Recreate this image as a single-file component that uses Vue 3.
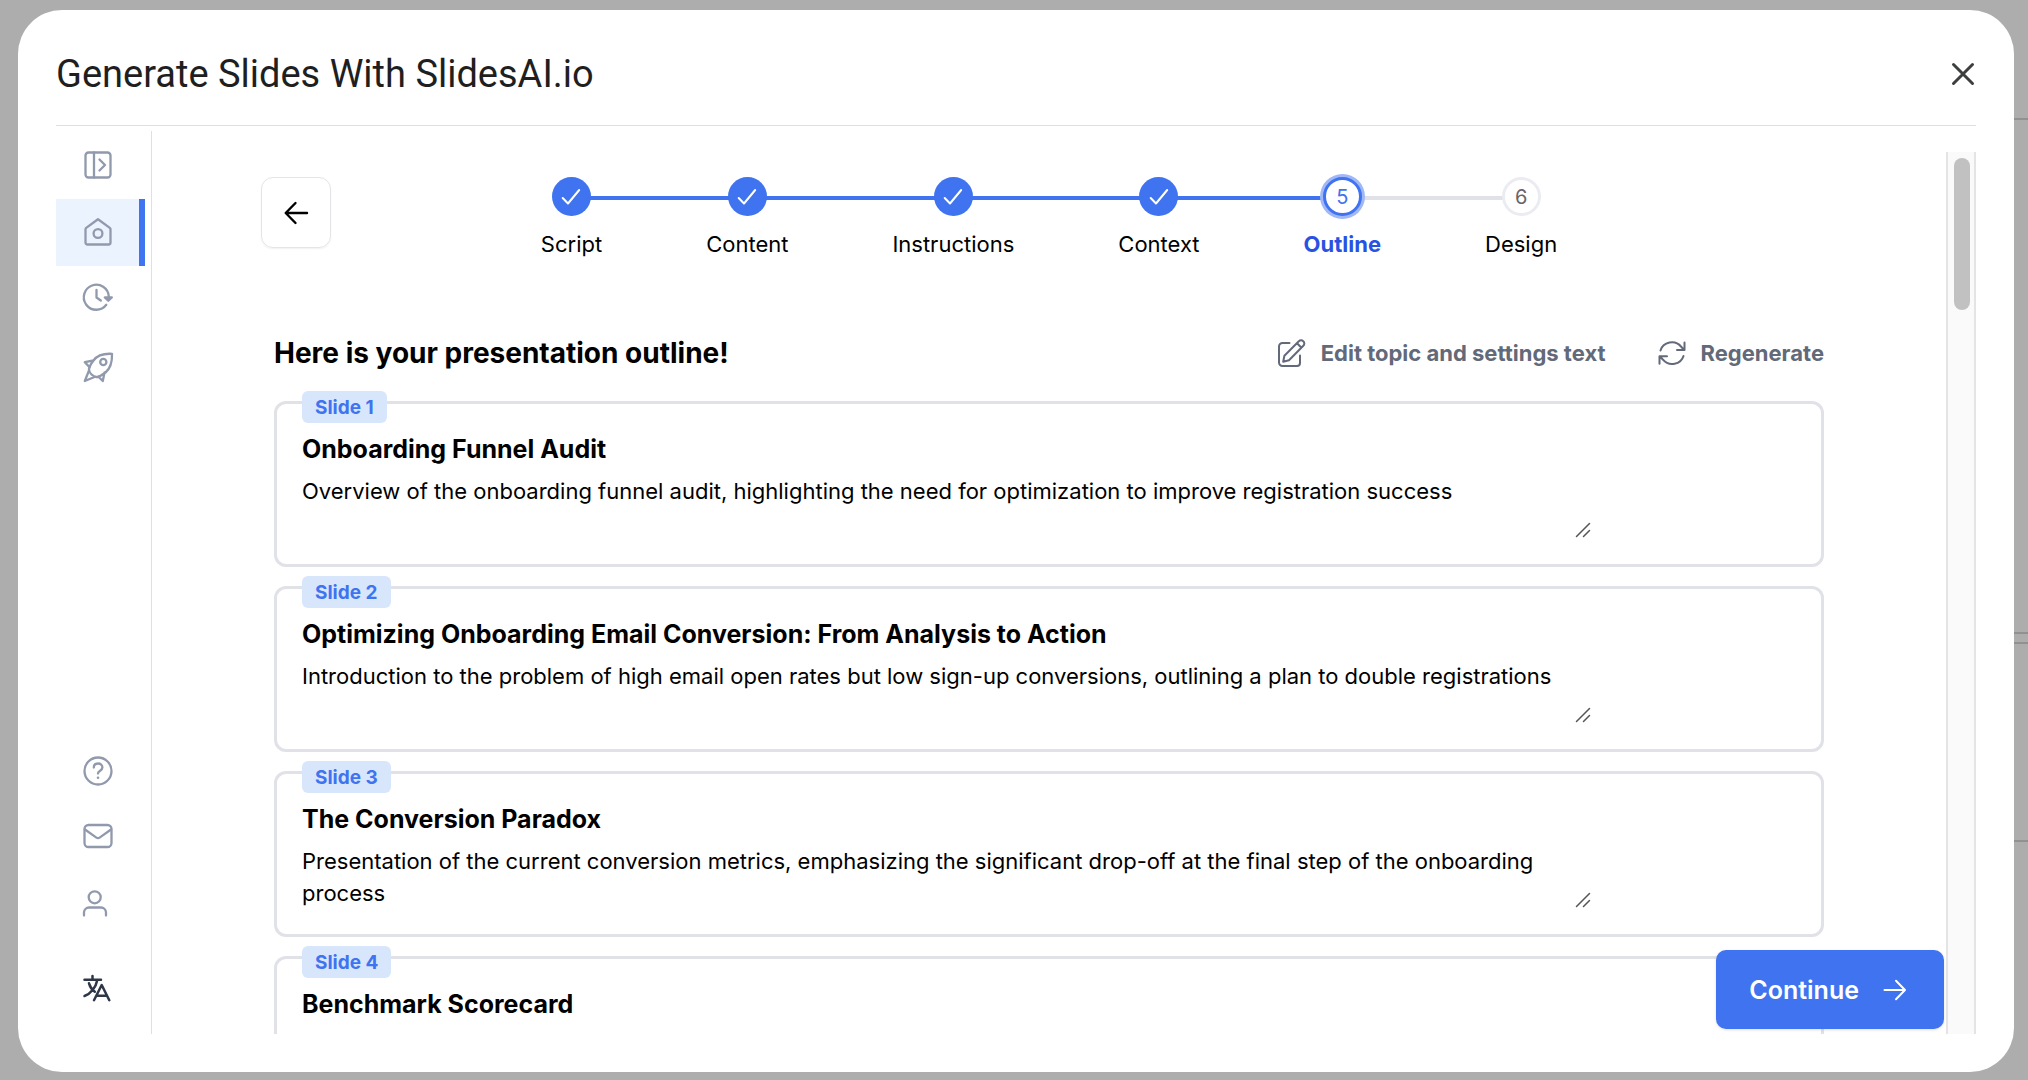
<script setup>
import { ref } from 'vue'

const steps = [
  { label: 'Script', state: 'done' },
  { label: 'Content', state: 'done' },
  { label: 'Instructions', state: 'done' },
  { label: 'Context', state: 'done' },
  { label: 'Outline', state: 'current' },
  { label: 'Design', state: 'todo' },
]

const slides = ref([
  {
    title: 'Onboarding Funnel Audit',
    text: 'Overview of the onboarding funnel audit, highlighting the need for optimization to improve registration success',
  },
  {
    title: 'Optimizing Onboarding Email Conversion: From Analysis to Action',
    text: 'Introduction to the problem of high email open rates but low sign-up conversions, outlining a plan to double registrations',
  },
  {
    title: 'The Conversion Paradox',
    text: 'Presentation of the current conversion metrics, emphasizing the significant drop-off at the final step of the onboarding process',
  },
  { title: 'Benchmark Scorecard', text: '' },
])
</script>

<template>
  <div class="backdrop">
    <div class="behind" aria-hidden="true"><i></i><i></i><i></i><i></i></div>

    <section class="modal" role="dialog" aria-labelledby="dialog-title">
      <header class="modal-head">
        <h1 id="dialog-title">Generate Slides With SlidesAI.io</h1>
        <button class="close" type="button" aria-label="Close">
          <svg width="22" height="22" viewBox="0 0 22 22"><path d="M1.5 1.5l19 19M20.500 1.500l-19 19" /></svg>
        </button>
      </header>

      <div class="body">
        <nav class="side" aria-label="Main">
          <button type="button" aria-label="Expand menu">
            <svg viewBox="0 0 28 28"><rect x="1.500" y=".5" width="25" height="25" rx="3" /><path d="M10 .5v25M15.500 7.500l5.500 5.500-5.500 5.500" /></svg>
          </button>
          <button type="button" class="active" aria-label="Home">
            <svg viewBox="0 1 28 28"><path d="M1.500 11.200c0-.6.300-1 .7-1.300L14 1.300l11.800 8.600c.4.3.7.7.7 1.300v13.300a2 2 0 0 1-2 2h-21a2 2 0 0 1-2-2z" /><circle cx="14" cy="15.500" r="4.400" /></svg>
          </button>
          <button type="button" aria-label="History">
            <svg viewBox="0 0 28 28"><path d="M22.300 18.800a12.500 12.500 0 1 1 2.500-8.300M12.500 4v7.500l4.300 3" /><path class="solid" d="M20.800 11.500h7l-3.500 3.200z" /></svg>
          </button>
          <button type="button" aria-label="Upgrade">
            <svg viewBox="0 0 28 28"><path d="M28 .8C19 .3 13 2.500 9.500 7.500c-3 4-4.500 6.500-4.500 9 0 2 1 3.500 2.500 5s3 2.500 5 2.500c2.500 0 5-1.500 9-4.500 5-4 6.800-9.500 6.500-18.700zM9.500 7.500L.8 9.200l5 5.200M20.500 19.500l-1.700 8.500-4.600-4.500M5 17.500L.8 28l9.700-4" /><circle cx="19.300" cy="9" r="3.100" /></svg>
          </button>
          <button type="button" class="push" aria-label="Help">
            <svg viewBox="0 0 28 28"><circle cx="14" cy="14" r="13.500" /><path d="M9.800 10.500c0-2.500 1.900-4 4.300-4s4.300 1.600 4.300 4c0 3.300-4.400 3-4.400 6" /><circle class="solid dot" cx="14" cy="20.700" r="1.300" /></svg>
          </button>
          <button type="button" class="low" aria-label="Contact">
            <svg viewBox="0 0 28 28"><rect x=".5" y="2" width="27" height="22" rx="4" /><path d="M1 6.500l11.400 8.100a2.800 2.800 0 0 0 3.200 0L27 6.500" /></svg>
          </button>
          <button type="button" class="low" aria-label="Account">
            <svg viewBox="0 0 28 28"><circle cx="10.700" cy="8.300" r="6" /><path d="M0 26.500V23.500a5 5 0 0 1 5-5h12a5 5 0 0 1 5 5v3" /></svg>
          </button>
          <button type="button" class="language" aria-label="Language">
            <svg viewBox="0 0 28 28"><path d="M.5 5.700h16.500M8.500 2v3.700M13.300 6C12 13 7 19.500.5 22M5 9.300c1 3.500 3 6.500 5.800 8.500M10 26.200L17.700 11l7.600 15.200M12.300 21.700h10.800" /></svg>
          </button>
        </nav>

        <main class="content">
          <div class="scroll">
            <div class="top">
              <button class="back" type="button" aria-label="Back">
                <svg width="24" height="24" viewBox="0 0 24 24"><path d="M23 12H2M11.500 2L1.700 12l9.800 10" /></svg>
              </button>
              <ol class="steps">
                <li v-for="(step, i) in steps" :key="step.label" :class="step.state">
                  <span class="bubble">
                    <svg v-if="step.state === 'done'" width="20" height="20" viewBox="0 0 20 20"><path d="M1.700 11l5.300 5.500L18.200 3" /></svg>
                    <template v-else>{{ i + 1 }}</template>
                  </span>
                  <span class="label">{{ step.label }}</span>
                </li>
              </ol>
            </div>

            <div class="outline">
              <div class="outline-head">
                <h2>Here is your presentation outline!</h2>
                <div class="actions">
                  <button type="button">
                    <svg width="28" height="28" viewBox="0 0 28 28"><path d="M11.500 4H4.500A3.500 3.500 0 0 0 1 7.500v16A3.500 3.500 0 0 0 4.500 27h14.500a3 3 0 0 0 3-3v-7.500" /><path d="M5.200 22.800l1.200-6L20.800 2.300a3 3 0 0 1 4.500 0 3 3 0 0 1 0 4.500L11 21.300zM19 4.300l4.500 4.500" /></svg>
                    Edit topic and settings text
                  </button>
                  <button type="button">
                    <svg width="28" height="28" viewBox="0 0 28 28"><path d="M2.500 11.500C5 3 17 .2 23 7.500l3 3.300M26.500 3.500v7.500h-7.500M25.500 17C23 25.500 11 28 5 20.700L2 17.500M1.500 24.800v-7.500H9" /></svg>
                    Regenerate
                  </button>
                </div>
              </div>

              <article v-for="(slide, i) in slides" :key="i" class="card">
                <label class="badge" :for="'slide-' + i">Slide {{ i + 1 }}</label>
                <h3>{{ slide.title }}</h3>
                <div class="field">
                  <textarea :id="'slide-' + i" v-model="slide.text" rows="2"></textarea>
                  <svg class="grip" width="14" height="14" viewBox="0 0 14 14"><path d="M.5 13.500l13-13M7.500 13.500l6-6" /></svg>
                </div>
              </article>
            </div>
          </div>

          <button class="continue" type="button">
            Continue
            <svg width="24" height="24" viewBox="0 0 24 24"><path d="M1.500 12h20M13 2.800l9 9.200-9 9.200" /></svg>
          </button>
        </main>

        <div class="track"><div class="thumb"></div></div>
      </div>
    </section>
  </div>
</template>

<style>
body {
  margin: 0;
  background: #adadad;
}
</style>

<style scoped>
* {
  box-sizing: border-box;
}
.backdrop {
  position: relative;
  height: 100vh;
  padding: 10px 14px 8px 18px;
  background: #adadad;
  font-family: Inter, "Liberation Sans", sans-serif;
  color: #000;
  overflow: hidden;
}
.behind {
  position: absolute;
  top: 0;
  right: 0;
  width: 60px;
  padding-top: 118px;
}
.behind i {
  display: block;
  height: 2px;
  background: #919191;
  margin-bottom: 512px;
}
.behind i:nth-child(2) {
  margin-bottom: 8px;
}
.behind i:nth-child(3) {
  margin-bottom: 196px;
}
button {
  font: inherit;
  color: inherit;
  background: none;
  border: 0;
  padding: 0;
  cursor: pointer;
}
svg {
  display: block;
  flex: none;
  fill: none;
  stroke: currentColor;
  stroke-width: 2;
  stroke-linecap: round;
  stroke-linejoin: round;
  overflow: visible;
}
h1,
h2,
h3 {
  margin: 0;
}
.modal {
  position: relative;
  display: flex;
  flex-direction: column;
  height: 100%;
  padding: 0 38px 38px;
  border-radius: 44px;
  background: #fff;
}
.modal-head {
  display: flex;
  align-items: center;
  justify-content: space-between;
  height: 116px;
  padding: 12px 2px 0 0;
  border-bottom: 1px solid #e0e0e0;
  flex: none;
}
.modal-head h1 {
  font-family: Roboto, sans-serif;
  font-weight: 400;
  font-size: 38px;
  line-height: 48px;
  color: #1f1f1f;
}
.close {
  color: #3c3f3e;
}
.close svg {
  stroke-width: 3;
}
.body {
  flex: 1;
  min-height: 0;
  display: flex;
}
.side {
  flex: none;
  width: 96px;
  margin-top: 5px;
  padding: 1px 0 13px;
  border-right: 1px solid #e0e0e0;
  display: flex;
  flex-direction: column;
  color: #9199ad;
}
.side button {
  display: flex;
  align-items: center;
  height: 67px;
  width: 89px;
  padding-left: 28px;
}
.side svg {
  width: 28px;
  height: 28px;
  stroke-width: 2.3;
}
.side .active {
  background: #ebf3fe;
  border-right: 6px solid #3f73ef;
}
.side .push {
  margin-top: auto;
}
.side .low {
  height: 66px;
}
.side .language {
  margin-top: 18px;
  color: #2d3748;
}
.side .language svg {
  stroke-width: 2.5;
}
.solid {
  fill: currentColor;
}
.dot {
  stroke: none;
}
.content {
  position: relative;
  flex: 1;
  min-width: 0;
  margin-top: 26px;
}
.scroll {
  height: 100%;
  padding-top: 25px;
  overflow: hidden;
}
.top {
  display: grid;
  grid-template-columns: 1fr auto 1fr;
  align-items: start;
  padding: 0 109px;
}
.back {
  display: grid;
  place-items: center;
  width: 70px;
  height: 71px;
  border: 1px solid #e4e4e9;
  border-radius: 12px;
  box-shadow: 0 1px 2px rgba(0, 0, 0, 0.06);
}
.back svg {
  stroke-width: 2.4;
}
.steps {
  display: flex;
  gap: 104px;
  margin: 0;
  padding: 0;
  list-style: none;
}
.steps li {
  position: relative;
  display: flex;
  flex-direction: column;
  align-items: center;
  gap: 14px;
}
.steps li::before,
.steps li::after {
  content: "";
  position: absolute;
  top: 19px;
  height: 4px;
  background: #3f73ef;
}
.steps li::before {
  left: 0;
  right: 50%;
}
.steps li::after {
  left: 50%;
  right: -104px;
}
.steps li:first-child::before,
.steps li:last-child::after {
  display: none;
}
.steps .current::after,
.steps .todo::before {
  background: #e1e2e8;
}
.bubble {
  position: relative;
  z-index: 1;
  display: grid;
  place-items: center;
  width: 39px;
  height: 39px;
  border-radius: 50%;
  background: #3f73ef;
  color: #fff;
  font-size: 20px;
}
.current .bubble {
  background: #fff;
  border: 3px solid #3f73ef;
  box-shadow: 0 0 0 3px #a0b8f7;
  color: #3f73ef;
}
.todo .bubble {
  background: #fff;
  border: 3px solid #ebecf1;
  color: #666;
}
.label {
  font-size: 22px;
  line-height: 28px;
}
.current .label {
  font-weight: 700;
  color: #2952e3;
}
.outline {
  margin: 75px 122px 0;
}
.outline-head {
  display: flex;
  align-items: center;
  justify-content: space-between;
  height: 40px;
  margin-bottom: 28px;
}
.outline-head h2 {
  font-size: 28px;
  font-weight: 700;
  line-height: 40px;
}
.actions {
  display: flex;
  gap: 52px;
}
.actions button {
  display: flex;
  align-items: center;
  gap: 15px;
  font-size: 22px;
  font-weight: 700;
  color: #626979;
}
.card {
  position: relative;
  margin-bottom: 19px;
  padding: 29px 25px 25px;
  border: 3px solid #e1e2e8;
  border-radius: 12px;
}
.badge {
  position: absolute;
  top: -13px;
  left: 25px;
  padding: 1px 13px 0;
  border-radius: 6px;
  background: #d8e6fc;
  color: #3f73ef;
  font-size: 19px;
  font-weight: 700;
  line-height: 31px;
}
.card h3 {
  font-size: 25px;
  font-weight: 700;
  line-height: 32px;
}
.field {
  position: relative;
  margin: 10px 204px 0 0;
}
textarea {
  display: block;
  width: 100%;
  height: 64px;
  padding: 0;
  border: 0;
  outline: 0;
  resize: none;
  overflow: hidden;
  background: none;
  font: inherit;
  font-size: 22px;
  line-height: 32px;
  color: #000;
}
.grip {
  position: absolute;
  right: 2px;
  bottom: 2px;
  color: #555;
  stroke-width: 1.5;
}
.continue {
  position: absolute;
  right: 2px;
  bottom: 5px;
  z-index: 2;
  display: flex;
  align-items: center;
  gap: 24px;
  height: 79px;
  padding: 0 37px 0 33px;
  border-radius: 10px;
  background: #3f73ef;
  box-shadow: 0 1px 3px rgba(0, 0, 0, 0.12);
  color: #fff;
  font-size: 25px;
  font-weight: 600;
}
.track {
  flex: none;
  width: 30px;
  margin-top: 26px;
  padding: 6px 4px 0 6px;
  border: solid #e4e4e4;
  border-width: 0 2px;
  background: #fafafa;
}
.thumb {
  width: 16px;
  height: 152px;
  border-radius: 8px;
  background: #c1c1c1;
}
</style>
